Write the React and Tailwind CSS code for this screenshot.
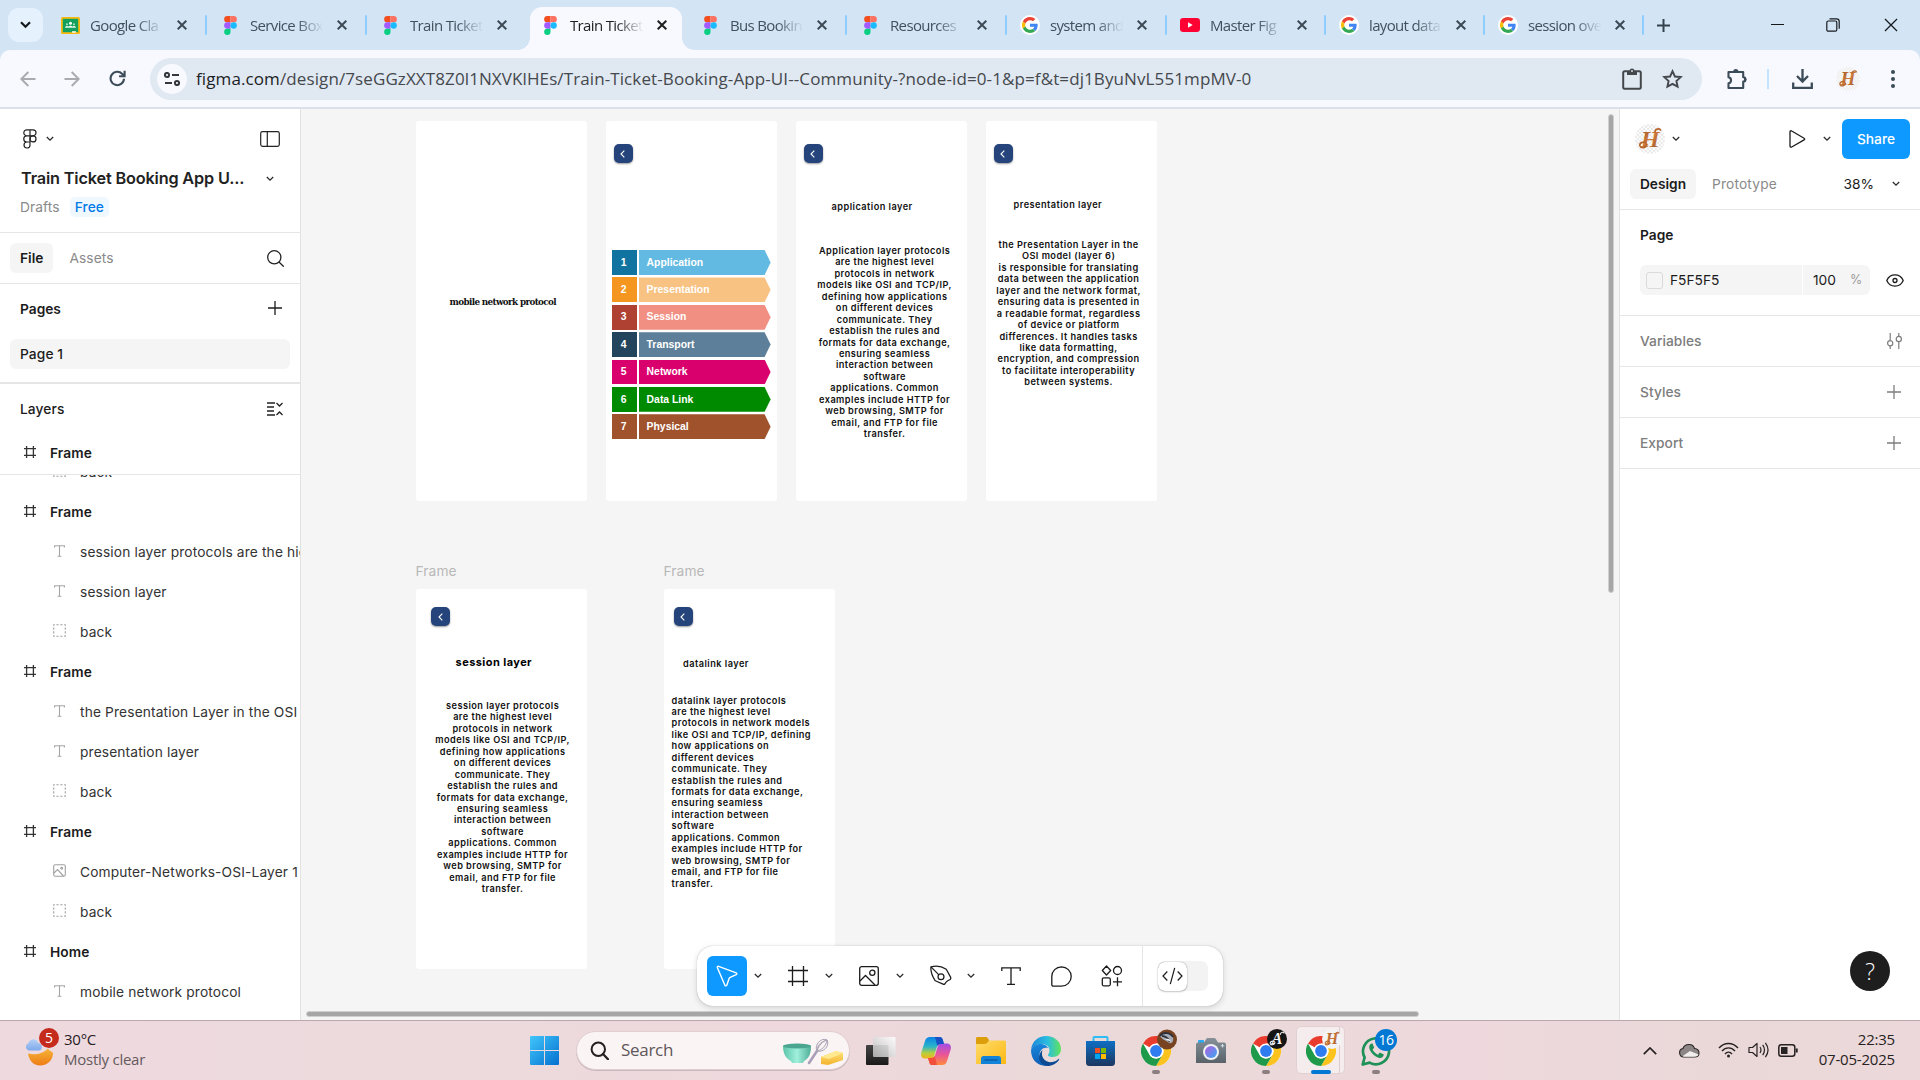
import React from "react";

/* ---------- browser chrome icons ---------- */

const FigmaLogo = () => (
  <svg width="13" height="19" viewBox="0 0 12 18" className="shrink-0">
    <path d="M3 0h3v6H3a3 3 0 0 1 0-6z" fill="#f24e1e" />
    <path d="M6 0h3a3 3 0 0 1 0 6H6z" fill="#ff7262" />
    <path d="M3 6h3v6H3a3 3 0 0 1 0-6z" fill="#a259ff" />
    <circle cx="9" cy="9" r="3" fill="#1abcfe" />
    <path d="M3 12h3v3a3 3 0 1 1-3-3z" fill="#0acf83" />
  </svg>
);

const ClassroomLogo = () => (
  <svg width="19" height="17" viewBox="0 0 19 17" className="shrink-0">
    <rect width="19" height="17" rx="1.5" fill="#f5b912" />
    <rect x="1.8" y="1.8" width="15.4" height="13.4" fill="#12a05c" />
    <circle cx="9.5" cy="6.3" r="1.5" fill="#fff" />
    <circle cx="6" cy="7.3" r="1.1" fill="#9fdcbc" />
    <circle cx="13" cy="7.3" r="1.1" fill="#9fdcbc" />
    <path d="M4 10.8c0-2 3-2 3.400-1.200C8 8.300 11 8.300 11.600 9.600c.4-.8 3.400-.8 3.400 1.200z" fill="#e6f6ee" />
    <rect x="11" y="14.200" width="4" height="1.600" fill="#fff7dc" />
  </svg>
);

const GoogleLogo = () => (
  <span className="flex size-5 shrink-0 items-center justify-center rounded-full bg-white">
    <svg width="16" height="16" viewBox="0 0 48 48">
      <path fill="#EA4335" d="M24 9.500c3.540 0 6.710 1.220 9.210 3.600l6.850-6.850C35.900 2.380 30.470 0 24 0 14.620 0 6.510 5.380 2.560 13.220l7.980 6.190C12.430 13.720 17.740 9.500 24 9.500z" />
      <path fill="#4285F4" d="M46.980 24.550c0-1.570-.15-3.090-.38-4.550H24v9.020h12.940c-.58 2.960-2.260 5.480-4.780 7.180l7.730 6c4.510-4.180 7.090-10.360 7.090-17.650z" />
      <path fill="#FBBC05" d="M10.530 28.590c-.48-1.450-.76-2.990-.76-4.590s.27-3.140.76-4.590l-7.980-6.190C.92 16.460 0 20.120 0 24s.92 7.540 2.560 10.780z" />
      <path fill="#34A853" d="M24 48c6.480 0 11.930-2.130 15.890-5.810l-7.730-6c-2.150 1.450-4.920 2.300-8.160 2.300-6.260 0-11.570-4.220-13.470-9.910l-7.980 6.190C6.510 42.620 14.620 48 24 48z" />
    </svg>
  </span>
);

const YouTubeLogo = () => (
  <svg width="20" height="14" viewBox="0 0 20 14" className="shrink-0">
    <rect width="20" height="14" rx="3.200" fill="#ff0033" />
    <path d="M8 4.200v5.600l4.700-2.800z" fill="#fff" />
  </svg>
);

const TAB_ICONS = {
  classroom: ClassroomLogo,
  figma: FigmaLogo,
  google: GoogleLogo,
  youtube: YouTubeLogo,
};

const TABS = [
  { icon: "classroom", title: "Google Cla", sep: true },
  { icon: "figma", title: "Service Box", sep: true },
  { icon: "figma", title: "Train Ticket" },
  { icon: "figma", title: "Train Ticket", active: true },
  { icon: "figma", title: "Bus Bookin", sep: true },
  { icon: "figma", title: "Resources", sep: true },
  { icon: "google", title: "system and", sep: true },
  { icon: "youtube", title: "Master Fig", sep: true, narrow: true },
  { icon: "google", title: "layout data", sep: true, narrow: true },
  { icon: "google", title: "session ove", sep: true, narrow: true },
];

const Cross = ({ size = 10, w = 2 }) => (
  <svg width={size} height={size} viewBox="0 0 10 10" stroke="currentColor" strokeWidth={w} fill="none">
    <path d="M.7.7l8.600 8.600M9.300.7L.7 9.300" />
  </svg>
);

function Tab({ tab }) {
  const Icon = TAB_ICONS[tab.icon];
  return (
    <div className={"relative flex h-full shrink-0 items-center " + (tab.narrow ? "w-[159px]" : "w-40")}>
      {tab.active && (
        <>
          <div className="absolute top-[7px] bottom-0 left-1 w-[152px] rounded-t-[12px] bg-[#f8f9fe]" />
          <div className="absolute bottom-0 -left-2 size-3 bg-[radial-gradient(circle_at_0_0,#d3e5f5_11.500px,#f8f9fe_12px)]" />
          <div className="absolute bottom-0 left-[156px] size-3 bg-[radial-gradient(circle_at_100%_0,#d3e5f5_11.500px,#f8f9fe_12px)]" />
        </>
      )}
      <span className="relative ml-[14px] flex w-5 justify-center">
        <Icon />
      </span>
      <span
        className={
          "relative ml-[10px] w-[75px] overflow-hidden whitespace-nowrap text-[15px] leading-5 tracking-[-0.65px] [mask-image:linear-gradient(to_right,black_62%,transparent_98%)] " +
          (tab.active ? "text-[#1f1f1f]" : "text-[#41505c]")
        }
      >
        {tab.title}
      </span>
      <span className={"relative ml-[12px] " + (tab.active ? "text-[#1f1f1f]" : "text-[#3c4a55]")}>
        <Cross />
      </span>
      {tab.sep && <span className="absolute -right-px h-5 w-[2.500px] rounded-full bg-[#8dcdff]" />}
    </div>
  );
}

function TabStrip() {
  return (
    <div className="flex h-[50px] items-center bg-[#d3e5f5]">
      <div className="ml-2 mr-[3px] flex h-[34px] w-[35px] shrink-0 items-center justify-center rounded-[11px] bg-[#e5f1fd] text-[#16191c]">
        <svg width="11" height="8" viewBox="0 0 11 8" fill="none" stroke="currentColor" strokeWidth="2.200">
          <path d="M1 1.200l4.500 4.600L10 1.200" />
        </svg>
      </div>
      {TABS.map((t, i) => (
        <Tab key={i} tab={t} />
      ))}
      <svg width="13" height="13" viewBox="0 0 13 13" stroke="#34424d" strokeWidth="2" className="ml-[14px]">
        <path d="M6.500 0v13M0 6.500h13" />
      </svg>
      <div className="ml-auto mr-[22px] flex items-center text-[#16191c]">
        <div className="h-px w-[13px] translate-y-[-1px] bg-current" />
        <svg width="14" height="14" viewBox="0 0 14 14" fill="none" stroke="currentColor" strokeWidth="1.200" className="ml-[42px]">
          <rect x=".8" y="3" width="10" height="10.200" rx="1.500" />
          <path d="M3.500 .8h7a2.700 2.700 0 0 1 2.700 2.700v7.200" />
        </svg>
        <span className="ml-[44px] flex">
          <Cross size={14} w={0.9} />
        </span>
      </div>
    </div>
  );
}

/* Monogram used as the profile picture */
function Monogram({ size, dark }) {
  return (
    <svg width={size} height={size} viewBox="0 0 30 30">
      <defs>
        <linearGradient id="copper" x1="0" y1="0" x2="1" y2="1">
          <stop offset="0" stopColor="#8a4a20" />
          <stop offset=".5" stopColor="#d07a3c" />
          <stop offset="1" stopColor="#96501f" />
        </linearGradient>
        <pattern id="checks" width="4" height="4" patternUnits="userSpaceOnUse">
          <rect width="4" height="4" fill="#fbfbfb" />
          <rect width="2" height="2" fill="#ebebeb" />
          <rect x="2" y="2" width="2" height="2" fill="#ebebeb" />
        </pattern>
      </defs>
      <circle cx="15" cy="15" r="15" fill={dark ? "#151515" : "url(#checks)"} />
      <text
        x="15"
        y="23"
        textAnchor="middle"
        fontSize="24"
        fontStyle="italic"
        fontWeight="bold"
        fontFamily="Liberation Serif, serif"
        fill={dark ? "#f2f2f2" : "url(#copper)"}
      >
        {dark ? "A" : "H"}
      </text>
      <path d="M11 19c-3-2-7 0-6 3 1 2.500 5 2.500 7-1.500M20 8c0-3 4-4 5.500-2" fill="none" stroke={dark ? "#f2f2f2" : "#b8682f"} strokeWidth="1.700" strokeLinecap="round" />
    </svg>
  );
}

function AddressRow() {
  return (
    <div className="h-[59px] bg-[#d3e5f5]">
      <div className="flex h-full items-center rounded-t-[10px] border-b-2 border-[#dce0ea] bg-[#f8f9fe] text-[#3b4b57]">
        <svg width="16" height="16" viewBox="0 0 16 16" fill="none" stroke="#a9abb0" strokeWidth="2" className="ml-5">
          <path d="M15.500 8H1.500M8.300 1L1.300 8l7 7" />
        </svg>
        <svg width="16" height="16" viewBox="0 0 16 16" fill="none" stroke="#a9abb0" strokeWidth="2" className="ml-[28px]">
          <path d="M.5 8h14M7.700 1l7 7-7 7" />
        </svg>
        <svg width="17" height="17" viewBox="0 0 17 17" fill="none" stroke="currentColor" strokeWidth="2.100" className="ml-[29px]">
          <path d="M15 8.800a6.700 6.700 0 1 1-1.800-4.900L15.500 6" />
          <path d="M15.600 .8v5.500h-5.500" />
        </svg>
        <div className="ml-6 flex h-[42px] w-[1552px] items-center rounded-full bg-[#e0e8f2]">
          <span className="ml-[7px] flex size-[30px] items-center justify-center rounded-full bg-[#f8f9fe]">
            <svg width="16" height="14" viewBox="0 0 16 14" fill="none" stroke="#33383c" strokeWidth="2">
              <circle cx="3" cy="3" r="2.100" />
              <path d="M8 3h7M1 11h7" />
              <circle cx="13" cy="11" r="2.100" />
            </svg>
          </span>
          <span className="ml-[9px] whitespace-nowrap text-[17px] leading-none tracking-[0.105px] text-[#45494d]">
            <span className="text-[#1b1d1f]">figma.com</span>
            /design/7seGGzXXT8Z0l1NXVKlHEs/Train-Ticket-Booking-App-UI--Community-?node-id=0-1&amp;p=f&amp;t=dj1ByuNvL551mpMV-0
          </span>
          <svg width="20" height="22" viewBox="0 0 20 22" fill="none" stroke="#44484c" strokeWidth="2" className="ml-auto">
            <rect x="1.200" y="3.200" width="17.600" height="17.600" rx="1.500" />
            <path d="M5 3h10v4H5z" fill="#44484c" stroke="none" />
            <circle cx="10" cy="3" r="2.500" fill="#44484c" stroke="none" />
            <circle cx="10" cy="3" r=".9" fill="#e0e8f2" stroke="none" />
          </svg>
          <svg width="21" height="20" viewBox="0 0 21 20" fill="none" stroke="#44484c" strokeWidth="1.900" className="ml-5 mr-[19px]">
            <path d="M10.500 2.200l2.400 5.300 5.800.6-4.300 3.900 1.200 5.700-5.100-2.900-5.100 2.900 1.200-5.700-4.300-3.900 5.800-.6z" />
          </svg>
        </div>
        <svg width="22" height="22" viewBox="0 0 22 22" fill="none" stroke="currentColor" strokeWidth="2.100" className="ml-6">
          <path d="M2.500 4h14.700v5.200a2.200 2.200 0 0 1 0 4.400V20H2.500v-4.600c3.400-.5 3.400-5.700 0-6.200z" strokeLinejoin="round" />
          <path d="M7.200 3.500a2.600 2.600 0 0 1 5.200 0zM18 9a2.500 2.500 0 0 1 0 5z" fill="currentColor" stroke="none" />
        </svg>
        <span className="ml-[19px] h-5 w-[2px] bg-[#c4e3ff]" />
        <svg width="21" height="20" viewBox="0 0 21 20" fill="none" stroke="currentColor" strokeWidth="2.300" className="ml-[23px]">
          <path d="M10.500 0v12M5 7l5.500 5.500L16 7M1.200 13.500v5.300h18.600v-5.300" />
        </svg>
        <span className="ml-[23px] flex">
          <Monogram size={24} />
        </span>
        <svg width="4" height="18" viewBox="0 0 4 18" fill="currentColor" className="ml-[31px]">
          <circle cx="2" cy="2" r="2" />
          <circle cx="2" cy="9" r="2" />
          <circle cx="2" cy="16" r="2" />
        </svg>
      </div>
    </div>
  );
}

/* ---------- editor icons ---------- */

const Chevron = ({ className = "" }) => (
  <svg width="8" height="6" viewBox="0 0 8 6" fill="none" stroke="#2b2b2b" strokeWidth="1.300" className={"shrink-0 " + className}>
    <path d="M.8 1l3.200 3.200L7.200 1" />
  </svg>
);

const Plus = ({ className = "" }) => (
  <svg width="14" height="14" viewBox="0 0 14 14" stroke="currentColor" strokeWidth="1.300" className={className}>
    <path d="M7 0v14M0 7h14" />
  </svg>
);

const HashIcon = () => (
  <svg width="12" height="12" viewBox="0 0 12 12" stroke="#333" strokeWidth="1.300">
    <path d="M2.600 0v12M9.400 0v12M0 2.600h12M0 9.400h12" />
  </svg>
);

const TextGlyph = () => (
  <svg width="11" height="12" viewBox="0 0 11 12" fill="none" stroke="#a5a5a5" strokeWidth="1.100">
    <path d="M.6 2.500V.8h9.800v1.700M5.500.8v10.500M3.600 11.300h3.800" />
  </svg>
);

const GroupIcon = () => (
  <svg width="13" height="13" viewBox="0 0 13 13" fill="none" stroke="#a0a0a0" strokeWidth="1.100">
    <rect x=".7" y=".7" width="11.600" height="11.600" strokeDasharray="2.200 1.670" strokeDashoffset="1.100" />
  </svg>
);

const ImageGlyph = () => (
  <svg width="13" height="13" viewBox="0 0 13 13" fill="none" stroke="#a0a0a0" strokeWidth="1.100">
    <rect x=".7" y=".7" width="11.600" height="11.600" rx="1.500" />
    <path d="M1 9l3.500-3.400L10.500 12" />
    <circle cx="8.700" cy="4.200" r=".9" />
  </svg>
);

const LAYER_ICONS = { text: TextGlyph, group: GroupIcon, image: ImageGlyph };

const LAYERS = [
  ["group", "back"],
  ["frame", "Frame"],
  ["text", "session layer protocols are the hig"],
  ["text", "session layer"],
  ["group", "back"],
  ["frame", "Frame"],
  ["text", "the Presentation Layer in the OSI"],
  ["text", "presentation layer"],
  ["group", "back"],
  ["frame", "Frame"],
  ["image", "Computer-Networks-OSI-Layer 1"],
  ["group", "back"],
  ["frame", "Home"],
  ["text", "mobile network protocol"],
];

function LayerRow({ kind, name }) {
  if (kind === "frame") {
    return (
      <div className="flex h-10 shrink-0 items-center pl-6 font-semibold text-[#1c1c1c]">
        <span className="-mt-0.5">
          <HashIcon />
        </span>
        <span className="ml-[14px] tracking-[0.1px]">{name}</span>
      </div>
    );
  }
  const Icon = LAYER_ICONS[kind];
  return (
    <div className="flex h-10 shrink-0 items-center overflow-hidden pl-[52px] whitespace-nowrap text-[#333]">
      <span className="-mt-[3px] flex w-[14px] shrink-0 justify-center">
        <Icon />
      </span>
      <span className="ml-[14px] tracking-[0.14px]">{name}</span>
    </div>
  );
}

function LeftPanel() {
  return (
    <aside className="flex w-[301px] shrink-0 flex-col overflow-hidden border-r border-[#e2e2e2] bg-white">
      <div className="flex h-[124px] shrink-0 flex-col border-b border-[#e6e6e6]">
        <div className="mt-5 flex h-5 items-center pl-[23px] pr-5">
          <svg width="14" height="20" viewBox="0 0 14 20" fill="none" stroke="#222" strokeWidth="1.200">
            <path d="M3.800.8H10a2.900 2.900 0 0 1 0 6H3.800a3 3 0 0 1 0-6zM7 .8v15.400a3 3 0 1 1-3.200-3.200H7M7 6.900H3.800a3 3 0 0 0 0 6.100H7" />
            <circle cx="10" cy="9.900" r="3" />
          </svg>
          <Chevron className="ml-[9px]" />
          <svg width="20" height="16" viewBox="0 0 20 16" fill="none" stroke="#222" strokeWidth="1.200" className="ml-auto">
            <rect x=".7" y=".7" width="18.600" height="14.600" rx="1.800" />
            <path d="M7.300 1v14" />
          </svg>
        </div>
        <div className="mt-5 flex h-5 items-center pr-[26px] pl-[21px]">
          <span className="-mt-px text-[16.250px] font-semibold tracking-[-0.16px] text-[#222]">Train Ticket Booking App U...</span>
          <Chevron className="ml-auto" />
        </div>
        <div className="mt-2 flex h-5 items-center pl-5">
          <span className="tracking-[0.1px] text-[#8a8a8a]">Drafts</span>
          <span className="ml-[10px] flex h-5 items-center rounded-[5px] bg-[#f0f8ff] px-[5px] font-medium tracking-[0.1px] text-[#007be5]">Free</span>
        </div>
      </div>
      <div className="flex h-[51px] shrink-0 items-center border-b border-[#e6e6e6] pl-[10px] pr-4">
        <span className="flex h-[30px] items-center rounded-[6px] bg-[#f5f5f5] px-[10px] font-semibold text-[#1c1c1c]">File</span>
        <span className="ml-4 tracking-[0.1px] text-[#8a8a8a]">Assets</span>
        <svg width="17" height="17" viewBox="0 0 17 17" fill="none" stroke="#222" strokeWidth="1.300" className="ml-auto">
          <circle cx="7.300" cy="7.300" r="6.600" />
          <path d="M12 12l4.700 4.700" />
        </svg>
      </div>
      <div className="flex h-[100px] shrink-0 flex-col border-b-2 border-[#e6e6e6] px-[10px]">
        <div className="flex h-[50px] items-center justify-between px-[10px] font-semibold text-[#1c1c1c]">
          Pages
          <Plus className="-mr-[2px] -mt-0.5" />
        </div>
        <div className="mt-[5px] flex h-[30px] items-center rounded-[6px] bg-[#f5f5f5] px-[10px] font-medium tracking-[0.1px] text-[#1c1c1c]">Page 1</div>
      </div>
      <div className="flex h-[49px] shrink-0 items-center justify-between pt-px pr-[17px] pl-5 font-medium tracking-[0.1px] text-[#1c1c1c]">
        Layers
        <svg width="16" height="14" viewBox="0 0 16 14" fill="none" stroke="#222" strokeWidth="1.300">
          <path d="M0 1h8M0 5h7M0 9h7M0 13h8M9.500 1l3 3 3-3M9.500 13l3-3 3 3" />
        </svg>
      </div>
      <div className="flex h-[42px] shrink-0 flex-col border-b border-[#e6e6e6]">
        <LayerRow kind="frame" name="Frame" />
      </div>
      <div className="flex min-h-0 flex-1 flex-col overflow-hidden">
        <div className="-mt-[23px] flex flex-col">
          {LAYERS.map(([kind, name], i) => (
            <LayerRow key={i} kind={kind} name={name} />
          ))}
        </div>
      </div>
    </aside>
  );
}

/* ---------- canvas ---------- */

const Artboard = ({ className, children }) => (
  <div className={"absolute h-[380px] w-[171px] rounded-[3px] bg-white " + className}>{children}</div>
);

const BackButton = ({ className }) => (
  <div className={"absolute flex size-[19px] items-center justify-center rounded-[5px] bg-[#26447c] shadow-[0_1px_2px_rgba(0,0,0,0.4)] " + className}>
    <svg width="5" height="8" viewBox="0 0 5 8" fill="none" stroke="#fff" strokeWidth="1.100" className="-ml-px">
      <path d="M4.300.6L1 4l3.300 3.400" />
    </svg>
  </div>
);

const Copy = ({ className, lines }) => (
  <div className={"absolute flex flex-col whitespace-nowrap text-[9.200px] leading-[11.430px] font-semibold tracking-[0.46px] text-[#111] " + className}>
    {lines.map((l) => (
      <span key={l}>{l}</span>
    ))}
  </div>
);

const OSI = [
  ["1", "Application", "bg-[#11739f]", "bg-[#62b9e1]"],
  ["2", "Presentation", "bg-[#f4961f]", "bg-[#f8c283]"],
  ["3", "Session", "bg-[#ae4132]", "bg-[#f18f83]"],
  ["4", "Transport", "bg-[#23445d]", "bg-[#5d7f99]"],
  ["5", "Network", "bg-[#d9006d]", "bg-[#d9006d]"],
  ["6", "Data Link", "bg-[#008a00]", "bg-[#008a00]"],
  ["7", "Physical", "bg-[#a0522d]", "bg-[#a0522d]"],
];

const PROTOCOL_LINES = [
  "are the highest level",
  "protocols in network",
  "models like OSI and TCP/IP,",
  "defining how applications",
  "on different devices",
  "communicate. They",
  "establish the rules and",
  "formats for data exchange,",
  "ensuring seamless",
  "interaction between",
  "software",
  "applications. Common",
  "examples include HTTP for",
  "web browsing, SMTP for",
  "email, and FTP for file",
  "transfer.",
];

const PRESENTATION_LINES = [
  "the Presentation Layer in the",
  "OSI model (layer 6)",
  "is responsible for translating",
  "data between the application",
  "layer and the network format,",
  "ensuring data is presented in",
  "a readable format, regardless",
  "of device or platform",
  "differences. It handles tasks",
  "like data formatting,",
  "encryption, and compression",
  "to facilitate interoperability",
  "between systems.",
];

const DATALINK_LINES = [
  "datalink layer protocols",
  "are the highest level",
  "protocols in network models",
  "like OSI and TCP/IP, defining",
  "how applications on",
  "different devices",
  ...PROTOCOL_LINES.slice(5),
];

const FrameLabel = ({ className }) => (
  <span className={"absolute text-[13.750px] leading-5 tracking-[0.1px] text-[#b8b8b8] " + className}>Frame</span>
);

const ToolGap = ({ children, className }) => <span className={"flex shrink-0 items-center justify-center " + className}>{children}</span>;

function ToolBar() {
  return (
    <div className="absolute top-[837px] left-[396px] flex h-[60px] w-[526px] items-center rounded-[16px] bg-white pl-[10px] shadow-[0_0_1px_rgba(0,0,0,0.35),0_2px_6px_rgba(0,0,0,0.14)]">
      <ToolGap className="size-10 rounded-[6px] bg-[#0d99ff]">
        <svg width="22" height="22" viewBox="0 0 22 22" fill="none" stroke="#fff" strokeWidth="1.400" strokeLinejoin="round">
          <path d="M1.300 2.500a1 1 0 0 1 1.300-1.200l17.600 6.600a1 1 0 0 1 0 1.800l-6 2.600a2 2 0 0 0-1 1l-2.400 6.900a1 1 0 0 1-1.900 0z" />
        </svg>
      </ToolGap>
      <ToolGap className="w-[21px]"><Chevron /></ToolGap>
      <ToolGap className="ml-5 w-5">
        <svg width="20" height="20" viewBox="0 0 20 20" stroke="#1c1c1c" strokeWidth="1.300">
          <path d="M4.500 0v20M15.500 0v20M0 4.500h20M0 15.500h20" />
        </svg>
      </ToolGap>
      <ToolGap className="ml-[10px] w-[21px]"><Chevron /></ToolGap>
      <ToolGap className="ml-5 w-5">
        <svg width="20" height="20" viewBox="0 0 20 20" fill="none" stroke="#1c1c1c" strokeWidth="1.300">
          <rect x=".7" y=".7" width="18.600" height="18.600" rx="2" />
          <circle cx="13.300" cy="6.800" r="2.600" />
          <path d="M1 15l5.500-5.500 9.500 9.500" />
        </svg>
      </ToolGap>
      <ToolGap className="ml-[11px] w-5"><Chevron /></ToolGap>
      <ToolGap className="ml-[20px] w-[22px]">
        <svg width="23" height="22" viewBox="0 0 23 22" fill="none" stroke="#1c1c1c" strokeWidth="1.300" strokeLinejoin="round">
          <path d="M1 1.500C6 0 12.500 1 17 4l4.500 8.200c.5 1 .3 1.700-.4 2.400L18.500 16c-1 .6-2 1.700-2.800 3-.5.900-1.200 1-2 .5L5.500 16C2.500 11.500.5 6 1 1.500z" />
          <path d="M1 1.500l8.300 8.300" />
          <circle cx="11.500" cy="11.800" r="3.100" />
        </svg>
      </ToolGap>
      <ToolGap className="ml-[9px] w-5"><Chevron /></ToolGap>
      <ToolGap className="ml-[20px] w-5">
        <svg width="20" height="18" viewBox="0 0 20 18" fill="none" stroke="#1c1c1c" strokeWidth="1.300">
          <path d="M.8 4V.8h18.400V4M10 .8v16.500M6 17.300h8" />
        </svg>
      </ToolGap>
      <ToolGap className="ml-[30px] w-[21px]">
        <svg width="21" height="21" viewBox="0 0 21 21" fill="none" stroke="#1c1c1c" strokeWidth="1.300">
          <path d="M10.500.8a9.700 9.700 0 0 1 0 19.400H2.300a1.500 1.500 0 0 1-1.500-1.500v-8.200A9.700 9.700 0 0 1 10.500.8z" />
        </svg>
      </ToolGap>
      <ToolGap className="ml-[29px] w-[22px]">
        <svg width="22" height="22" viewBox="0 0 22 22" fill="none" stroke="#1c1c1c" strokeWidth="1.300">
          <path d="M5.500 1l4.200 4.500-4.200 4.500-4.200-4.500z" strokeLinejoin="round" />
          <circle cx="16.500" cy="5.500" r="4" />
          <rect x="1.300" y="12.800" width="8" height="8" rx="1.500" />
          <path d="M16.500 12.300v9M12 16.800h9" />
        </svg>
      </ToolGap>
      <div className="ml-[19px] h-full w-px bg-[#e6e6e6]" />
      <div className="ml-[15px] flex h-[30px] w-[50px] items-center rounded-[7px] bg-[#f3f3f3]">
        <span className="flex h-[29px] w-[29px] items-center justify-center rounded-[7px] bg-white shadow-[0_0_1px_rgba(0,0,0,0.5),0_1px_2px_rgba(0,0,0,0.18)]">
          <svg width="21" height="18" viewBox="0 0 21 18" fill="none" stroke="#1c1c1c" strokeWidth="1.200">
            <path d="M5.300 4.500L1 9l4.300 4.500M15.700 4.500L20 9l-4.300 4.500M12.700.8L8.300 17.200" />
          </svg>
        </span>
      </div>
    </div>
  );
}

function Canvas() {
  return (
    <main className="relative min-w-0 flex-1 overflow-hidden bg-[#f5f5f5]">
      <Artboard className="top-3 left-[114.600px]">
        <span className="absolute top-[174px] left-[34px] whitespace-nowrap font-['DejaVu_Serif'] text-[8.800px] leading-[14px] font-bold tracking-[-0.640px] text-[#111]">
          mobile network protocol
        </span>
      </Artboard>

      <Artboard className="top-3 left-[304.600px]">
        <BackButton className="top-[23px] left-2" />
        <div className="absolute top-[129px] left-[6px] flex w-[159px] flex-col gap-[2.500px] font-['Liberation_Sans'] text-[10.400px] font-bold text-white">
          {OSI.map(([n, label, dark, light]) => (
            <div key={n} className="flex h-[24.900px] gap-[2px]">
              <span className={"flex w-[25px] items-center justify-center pr-px " + dark}>{n}</span>
              <span className={"flex flex-1 items-center pl-[8px] [clip-path:polygon(0_0,calc(100%-6px)_0,100%_50%,calc(100%-6px)_100%,0_100%)] " + light}>
                {label}
              </span>
            </div>
          ))}
        </div>
      </Artboard>

      <Artboard className="top-3 left-[494.600px]">
        <BackButton className="top-[23px] left-2" />
        <Copy className="top-[79.500px] left-[36px]" lines={["application layer"]} />
        <Copy className="top-[124px] left-[9px] w-40 items-center" lines={["Application layer protocols", ...PROTOCOL_LINES]} />
      </Artboard>

      <Artboard className="top-3 left-[684.600px]">
        <BackButton className="top-[23px] left-2" />
        <Copy className="top-[77.500px] left-[28px]" lines={["presentation layer"]} />
        <Copy className="top-[118px] left-[3px] w-40 items-center" lines={PRESENTATION_LINES} />
      </Artboard>

      <FrameLabel className="top-[452px] left-[114.500px]" />
      <Artboard className="top-[480px] left-[114.600px]">
        <BackButton className="top-[18px] left-[15.500px]" />
        <span className="absolute top-[66px] left-[40px] whitespace-nowrap text-[11px] leading-[14px] font-bold tracking-[0.430px] text-black">session layer</span>
        <Copy className="top-[111px] left-[7px] w-40 items-center" lines={["session layer protocols", ...PROTOCOL_LINES]} />
      </Artboard>

      <FrameLabel className="top-[452px] left-[362.500px]" />
      <Artboard className="top-[480px] left-[362.600px]">
        <BackButton className="top-[18px] left-[10px]" />
        <Copy className="top-[69px] left-[19.500px]" lines={["datalink layer"]} />
        <Copy className="top-[105.500px] left-[8px]" lines={DATALINK_LINES} />
      </Artboard>

      <div className="absolute top-[5px] right-[5px] h-[479px] w-[6px] rounded-full border border-[#cfcfcf] bg-[#a6a6a6]" />
      <div className="absolute bottom-[3px] left-[5px] h-[6px] w-[1113px] rounded-full border border-[#cfcfcf] bg-[#a6a6a6]" />

      <ToolBar />
    </main>
  );
}

/* ---------- right panel ---------- */

function Section({ label, children }) {
  return (
    <div className="flex h-[51px] items-center justify-between border-b border-[#e6e6e6] pr-[18px] pl-5 font-medium tracking-[0.05px] text-[#7d7d7d]">
      {label}
      <span className="flex w-4 justify-center text-[#7d7d7d]">{children}</span>
    </div>
  );
}

function RightPanel() {
  return (
    <aside className="relative flex w-[301px] shrink-0 flex-col border-l border-[#e2e2e2] bg-white">
      <div className="flex h-[101px] shrink-0 flex-col border-b border-[#e6e6e6]">
        <div className="mt-[10px] flex h-10 items-center pr-[10px] pl-[15px]">
          <Monogram size={30} />
          <Chevron className="ml-[7px]" />
          <svg width="17" height="18" viewBox="0 0 17 18" fill="none" stroke="#1c1c1c" strokeWidth="1.300" strokeLinejoin="round" className="ml-auto">
            <path d="M1 1.800C1 .9 2 .5 2.700 1l12.400 7.200c.8.500.8 1.300 0 1.700L2.700 17c-.8.500-1.700 0-1.700-.9z" />
          </svg>
          <Chevron className="ml-[17px]" />
          <span className="ml-[11px] flex h-10 w-[68px] items-center justify-center rounded-[6px] bg-[#0d99ff] font-medium text-white">Share</span>
        </div>
        <div className="mt-[10px] flex h-[30px] items-center pr-5 pl-[10px]">
          <span className="flex h-full w-[66px] items-center justify-center rounded-[6px] bg-[#f5f5f5] font-semibold text-[#1c1c1c]">Design</span>
          <span className="ml-4 tracking-[0.15px] text-[#8a8a8a]">Prototype</span>
          <span className="ml-auto text-[#1c1c1c]">38%</span>
          <Chevron className="ml-[18px]" />
        </div>
      </div>
      <div className="flex h-[106px] shrink-0 flex-col border-b border-[#e6e6e6] pl-5">
        <span className="mt-[15px] leading-5 font-semibold text-[#1c1c1c]">Page</span>
        <div className="mt-5 flex h-[30px] items-center">
          <div className="flex h-full w-[230px] items-center rounded-[6px] bg-[#f5f5f5] text-[#1c1c1c]">
            <span className="ml-[6px] size-[17px] rounded-[3px] border border-[#dadada] bg-[#f5f5f5]" />
            <span className="ml-[7px] w-[132px]">F5F5F5</span>
            <span className="h-full w-px bg-white" />
            <span className="ml-[10px] w-[37px]">100</span>
            <span className="text-[12.500px] text-[#9a9a9a]">%</span>
          </div>
          <svg width="18" height="13" viewBox="0 0 18 13" fill="none" stroke="#1c1c1c" strokeWidth="1.300" className="ml-4">
            <path d="M.8 6.500C2.300 3 5.400.9 9 .9s6.700 2.100 8.200 5.600c-1.500 3.500-4.600 5.600-8.200 5.600S2.300 10 .8 6.500z" />
            <circle cx="9" cy="6.500" r="2" />
          </svg>
        </div>
      </div>
      <Section label="Variables">
        <svg width="15" height="16" viewBox="0 0 15 16" fill="none" stroke="currentColor" strokeWidth="1.200" className="shrink-0">
          <path d="M3.200 0v7.500M3.200 13v3M11.800 0v3.500M11.800 9v7" />
          <circle cx="3.200" cy="10.200" r="2.600" />
          <circle cx="11.800" cy="6" r="2.600" />
        </svg>
      </Section>
      <Section label="Styles"><Plus /></Section>
      <Section label="Export"><Plus /></Section>
      <span className="absolute right-[30px] bottom-[29px] flex size-10 items-center justify-center rounded-full bg-[#1e1e1e] font-['Open_Sans'] text-[23px] font-light text-white">?</span>
    </aside>
  );
}

/* ---------- task bar ---------- */

const ChromeLogo = () => (
  <svg width="30" height="30" viewBox="0 0 30 30">
    <circle cx="15" cy="15" r="15" fill="#fff" />
    <path d="M15 15L2 7.500A15 15 0 0 1 28 7.500H15z" fill="#ea3c2e" />
    <path d="M28 7.500A15 15 0 0 1 15 30l6.500-11.200A7.500 7.500 0 0 0 15 7.500z" fill="#fcc31e" />
    <path d="M2 7.500l6.500 11.300A7.500 7.500 0 0 0 21.500 18.800L15 30A15 15 0 0 1 2 7.500z" fill="#1f9a4b" />
    <circle cx="15" cy="15" r="7.500" fill="#fff" />
    <circle cx="15" cy="15" r="5.900" fill="#2f7cf0" />
  </svg>
);

const TaskViewLogo = () => (
  <svg width="31" height="30" viewBox="0 0 31 30">
    <defs>
      <linearGradient id="tvDark" x1="0" y1="0" x2="0" y2="1"><stop offset="0" stopColor="#444" /><stop offset="1" stopColor="#1a1a1a" /></linearGradient>
      <linearGradient id="tvLight" x1="1" y1="0" x2="0" y2="1"><stop offset="0" stopColor="#fff" /><stop offset="1" stopColor="#bbb" /></linearGradient>
    </defs>
    <rect x="1" y="9" width="22.500" height="20" rx="1" fill="url(#tvDark)" />
    <rect x="8" y="1" width="22.500" height="20" rx="1" fill="url(#tvLight)" opacity=".88" />
  </svg>
);

const CopilotLogo = () => (
  <svg width="30" height="28" viewBox="0 0 30 28">
    <defs>
      <linearGradient id="cpA" x1="0" y1="0" x2="0" y2="1"><stop offset="0" stopColor="#0a84e8" /><stop offset=".45" stopColor="#2cb5c8" /><stop offset=".75" stopColor="#b8cf3c" /><stop offset="1" stopColor="#f2b31c" /></linearGradient>
      <linearGradient id="cpB" x1="0" y1="0" x2="0" y2="1"><stop offset="0" stopColor="#a24ee8" /><stop offset=".5" stopColor="#e8559a" /><stop offset="1" stopColor="#ff8a3c" /></linearGradient>
    </defs>
    <path d="M9 0h9.500c2 0 2.700 1 3.200 2.600L23 7h-3.500c-2 0-3 1-3.600 3l-2.600 8.500C12.500 21 11 21.500 9 21.500H4C.5 21.500-.5 18.500.3 15.500L4 4C5 1 6.500 0 9 0z" fill="url(#cpA)" />
    <path d="M21 28h-9.500c-2 0-2.700-1-3.200-2.600L7 21h3.500c2 0 3-1 3.600-3l2.600-8.500C17.500 7 19 6.500 21 6.500h5c3.500 0 4.500 3 3.700 6L26 24c-1 3-2.500 4-5 4z" fill="url(#cpB)" />
    <path d="M14 0h4.500c2 0 2.700 1 3.200 2.600L23 7h-3.500c-1.500 0-2.500.7-3.200 2z" fill="#1751c4" />
    <path d="M16 28h-4.500c-2 0-2.700-1-3.200-2.600L7 21h3.500c1.500 0 2.500-.7 3.200-2z" fill="#f0503c" />
  </svg>
);

const ExplorerLogo = () => (
  <svg width="30" height="27" viewBox="0 0 30 27">
    <defs><linearGradient id="fe" x1="0" y1="0" x2="1" y2="1"><stop offset="0" stopColor="#ffdc6b" /><stop offset="1" stopColor="#fcb814" /></linearGradient></defs>
    <path d="M0 1.500C0 .6.600 0 1.500 0h8.300c.8 0 1.300.3 1.700.8L13 3v5H0z" fill="#dd9e0c" />
    <path d="M0 7h8.500c1 0 1.800-.3 2.500-1l2-2.500h15.500c.9 0 1.500.6 1.500 1.500V27H0z" fill="url(#fe)" />
    <path d="M5 27v-5.500c0-1.500 1-2.500 2.500-2.500h15c1.500 0 2.500 1 2.500 2.500V27z" fill="#1383d8" />
    <path d="M8.500 23h13" stroke="#0a5ca8" strokeWidth="1.500" />
  </svg>
);

const EdgeLogo = () => (
  <svg width="30" height="30" viewBox="0 0 30 30">
    <defs>
      <linearGradient id="ed1" x1="0" y1=".3" x2="1" y2=".3"><stop offset="0" stopColor="#1a86d8" /><stop offset=".55" stopColor="#2bbde0" /><stop offset="1" stopColor="#62e35c" /></linearGradient>
      <linearGradient id="ed2" x1="0" y1="0" x2="0" y2="1"><stop offset="0" stopColor="#1787dc" /><stop offset="1" stopColor="#0f5fb5" /></linearGradient>
    </defs>
    <path d="M0 14C1 5 7.500 0 15 0c9 0 15 6 15 13 0 5-3.500 8-8.500 8-3.500 0-4.500-1.200-4.500-2 0-1 1.500-1.500 1.500-4.500 0-4-3.500-6.500-8-6.500C6 8 2 10 0 14z" fill="url(#ed1)" />
    <path d="M0 14c2-4.500 6.500-6.500 10.500-6 3 .3 5.500 2 6.500 4-5-1.500-9 2.500-8.300 8 .5 4.500 4 8.500 8.300 9.800C7 30.800 0 24 0 14z" fill="url(#ed2)" />
    <path d="M11.500 14c-2.500 8 3.500 13 10 12 2.500-.4 4.500-1.500 6-3 .4-.4.900.1.700.5C26 27.500 21 30 16.500 30 10 29 7 24 8.500 19c.6-2 1.500-3.800 3-5z" fill="#0c4a94" />
  </svg>
);

const StoreLogo = () => (
  <svg width="29" height="30" viewBox="0 0 29 30">
    <defs><linearGradient id="st" x1="0" y1="0" x2="0" y2="1"><stop offset="0" stopColor="#0e6fc4" /><stop offset="1" stopColor="#1c365f" /></linearGradient></defs>
    <path d="M7.500 6V2c0-.6.400-1 1-1h12c.6 0 1 .4 1 1v4" fill="none" stroke="#2ebcf4" strokeWidth="2" />
    <path d="M0 5h29v21.500a3.500 3.500 0 0 1-3.500 3.500h-22A3.500 3.500 0 0 1 0 26.500z" fill="url(#st)" />
    <path d="M9 12h5v5H9z" fill="#f25022" />
    <path d="M15 12h5v5h-5z" fill="#7fba00" />
    <path d="M9 18h5v5H9z" fill="#00a4ef" />
    <path d="M15 18h5v5h-5z" fill="#ffb900" />
  </svg>
);

const CameraLogo = () => (
  <svg width="30" height="25" viewBox="0 0 30 25">
    <defs>
      <linearGradient id="lens" x1="0" y1="0" x2="1" y2="1"><stop offset="0" stopColor="#b55fe0" /><stop offset="1" stopColor="#35a6f2" /></linearGradient>
      <linearGradient id="cam" x1="0" y1="0" x2="0" y2="1"><stop offset="0" stopColor="#86919a" /><stop offset="1" stopColor="#596269" /></linearGradient>
    </defs>
    <rect x="2" y="2" width="6" height="4" rx="1" fill="#2aa8f0" />
    <path d="M2 4.500h6l2-3.300C10.500.4 11 0 12 0h6c1 0 1.500.4 2 1.200l2 3.300h6a2 2 0 0 1 2 2V25H0V6.500a2 2 0 0 1 2-2z" fill="url(#cam)" />
    <circle cx="15" cy="14" r="8" fill="#eef1f4" />
    <circle cx="15" cy="14" r="6" fill="url(#lens)" />
    <path d="M26.500 6v3.500M24.700 7.800h3.600" stroke="#d8dde0" strokeWidth="1" />
  </svg>
);

const WhatsAppLogo = () => (
  <svg width="30" height="30" viewBox="0 0 30 30">
    <path d="M1.700 28.500l1.900-7A13 13 0 1 1 8.600 26.600z" fill="none" stroke="#1d9157" strokeWidth="2.700" strokeLinejoin="round" />
    <path d="M10.500 7.500c-2.500 1-3 3.800-1.500 6.700 1.800 3.400 4.600 6.200 8.500 7.600 2.500.8 5-.2 5.300-3.200l-4-2.100-1.800 2.200c-2.500-1-4.300-2.800-5.400-5.200l1.600-1.700-1.700-4.300z" fill="#1d9157" />
  </svg>
);

const BaseballAvatar = () => (
  <svg width="20" height="21" viewBox="0 0 20 21">
    <circle cx="10" cy="10.500" r="10" fill="#774320" />
    <path d="M3 7c3-4 10-4 13 1 1 4-1 7-4 6-3-3-7-3-9-7z" fill="#a9adb8" />
    <path d="M5 7c3 0 6 2 8 6M3 7c3-4 10-4 13 1" fill="none" stroke="#2e313b" strokeWidth="2" />
    <path d="M8 10c3-1 6 0 6 3z" fill="#f1f2f5" />
  </svg>
);

const APPS = [
  { id: "taskview", icon: TaskViewLogo },
  { id: "copilot", icon: CopilotLogo },
  { id: "explorer", icon: ExplorerLogo },
  { id: "edge", icon: EdgeLogo },
  { id: "store", icon: StoreLogo },
  { id: "chrome-1", icon: ChromeLogo, open: true, badge: <BaseballAvatar /> },
  { id: "camera", icon: CameraLogo },
  { id: "chrome-2", icon: ChromeLogo, open: true, badge: <Monogram size={20} dark /> },
  { id: "chrome-3", icon: ChromeLogo, focused: true, badge: <Monogram size={20} /> },
  { id: "whatsapp", icon: WhatsAppLogo, open: true, count: 16 },
];

function TaskApp({ app }) {
  const Icon = app.icon;
  return (
    <div className="relative flex h-full w-[55px] shrink-0 items-center justify-center">
      {app.focused && (
        <div className="absolute top-[5px] left-[3px] h-12 w-[49px] rounded-[5px] border border-[#e3d0d3] bg-[#f5ecee]">
          <div className="absolute inset-y-0 right-1 border-r border-[#ddcdd0]" />
        </div>
      )}
      <span className="relative flex">
        <Icon />
      </span>
      {app.badge && <span className="absolute top-[8px] left-[29px] flex">{app.badge}</span>}
      {app.count && (
        <span className="absolute top-[8px] left-[27px] flex size-[22px] items-center justify-center rounded-full bg-[#0078d4] pb-px text-[14px] tracking-[-0.5px] text-white">
          {app.count}
        </span>
      )}
      {app.open && <span className="absolute bottom-[6px] h-1 w-2 rounded-full bg-[#8c7f82]" />}
      {app.focused && <span className="absolute bottom-[6px] h-1 w-5 rounded-full bg-[#0078d4]" />}
    </div>
  );
}

function TaskBar() {
  return (
    <footer className="flex h-[60px] shrink-0 items-center border-t border-[#b9a9ac] bg-[linear-gradient(90deg,#eed9df_0%,#ecdadc_25%,#eed8dd_40%,#ead9d8_60%,#eed8dd_76%,#ead8d8_90%,#ecd8da_100%)]">
      <div className="flex w-[530px] items-center">
        <div className="relative ml-6 size-[36px]">
          <svg width="32" height="28" viewBox="0 0 32 28" className="absolute top-[5px] left-0">
            <defs>
              <linearGradient id="moon" x1="0" y1="0" x2="0" y2="1"><stop offset="0" stopColor="#f5b53a" /><stop offset="1" stopColor="#ee7c14" /></linearGradient>
              <linearGradient id="cloud" x1="0" y1="0" x2="0" y2="1"><stop offset="0" stopColor="#b4d0f6" /><stop offset="1" stopColor="#7ea9ea" /></linearGradient>
            </defs>
            <path d="M4 15.500c8 2 15 0 20-5 1 2 5 4 5 4 0 8-5 12.500-13 13C9 27.500 5 22 4 15.500z" fill="url(#moon)" />
            <path d="M4.500 12.500a4 4 0 0 1 0-7.500C6 0 13 0 14 5c5 0 5 7.500 1 7.500z" fill="url(#cloud)" />
          </svg>
          <span className="absolute -top-[5px] left-[15px] flex size-[20px] items-center justify-center rounded-full bg-[#c42b1c] text-[14px] leading-none text-white">5</span>
        </div>
        <div className="-mt-[3px] ml-1 flex flex-col text-[15px] leading-[20.500px] tracking-[-0.25px]">
          <span className="text-[#27201f]">30°C</span>
          <span className="text-[#655a5c]">Mostly clear</span>
        </div>
      </div>
      <svg width="29" height="29" viewBox="0 0 29 29">
        <defs><linearGradient id="win" x1="0" y1="0" x2="1" y2="1"><stop offset="0" stopColor="#41c6fb" /><stop offset="1" stopColor="#0470cf" /></linearGradient></defs>
        <path d="M0 1a1 1 0 0 1 1-1h13v14H0zM15 0h13a1 1 0 0 1 1 1v13H15zM0 15h14v14H1a1 1 0 0 1-1-1zM15 15h14v13a1 1 0 0 1-1 1H15z" fill="url(#win)" />
      </svg>
      <div className="ml-[17px] flex h-[39px] w-[274px] items-center rounded-full border border-[#e0ced1] bg-[#faf4f4] shadow-[0_1px_0_#c9b8bb]">
        <svg width="19" height="19" viewBox="0 0 19 19" fill="none" stroke="#252122" strokeWidth="2" className="ml-[13px]">
          <circle cx="8.300" cy="8.300" r="6.700" />
          <path d="M13 13l5 5.200" strokeLinecap="round" strokeWidth="2.300" />
        </svg>
        <span className="-mt-px ml-3 text-[17px] tracking-[-0.3px] text-[#5f5759]">Search</span>
        <svg width="62" height="30" viewBox="0 0 62 30" className="ml-auto mr-[4px]">
          <defs>
            <linearGradient id="bowl" x1="0" y1="0" x2="1" y2="0"><stop offset="0" stopColor="#5cc4a8" /><stop offset=".5" stopColor="#a0f0dc" /><stop offset="1" stopColor="#4fae98" /></linearGradient>
            <linearGradient id="butter" x1="0" y1="0" x2="0" y2="1"><stop offset="0" stopColor="#ffe27a" /><stop offset="1" stopColor="#f3b32c" /></linearGradient>
          </defs>
          <path d="M0 10c0 9 4 13 8 15l1 2h11l1-2c4-2 7-6 7-15z" fill="url(#bowl)" />
          <ellipse cx="14" cy="10" rx="14" ry="2.500" fill="#4aa690" />
          <path d="M26 27l8-12" stroke="#a99fb8" strokeWidth="2.600" strokeLinecap="round" />
          <path d="M34 15c-3-6 4-14 10-11 3 5-3 13-10 11zM34 15C36 9 40 5 44 4M34 15c0-5 3-9 10-11M34 15c5-1 9-5 10-11" fill="none" stroke="#a8a2b4" strokeWidth="1" />
          <path d="M38 21l15-6 7 2v7l-15 5-7-1z" fill="url(#butter)" />
          <path d="M38 21l15-6 7 2-14 6z" fill="#ffe88e" />
        </svg>
      </div>
      <div className="ml-[3px] flex h-full">
        {APPS.map((a) => (
          <TaskApp key={a.id} app={a} />
        ))}
      </div>
      <div className="ml-auto flex items-center pr-[25px] text-[#272223]">
        <svg width="14" height="8" viewBox="0 0 14 8" fill="none" stroke="currentColor" strokeWidth="1.700">
          <path d="M.8 7.200L7 1l6.200 6.200" />
        </svg>
        <svg width="21" height="15" viewBox="0 0 21 15" className="-mt-px ml-[22px]">
          <path d="M5 14a4.300 4.300 0 0 1-1-8.500C5.500.5 14 0 15.500 5.500c6 .5 6 8.500 0 8.500z" fill="#8c8686" stroke="#272223" strokeWidth="1.100" />
          <path d="M3.500 13.300L11 8l8.500 3.500c-.8 1.800-2 2.200-4 2.200H5z" fill="#f2eeee" />
        </svg>
        <svg width="21" height="16" viewBox="0 0 21 16" fill="none" stroke="currentColor" strokeWidth="1.400" className="-mt-px ml-[18px]">
          <path d="M1 6c5.300-6 13.700-6 19 0M4 9c3.600-4.200 9.400-4.200 13 0M7 12c2-2.500 5-2.500 7 0" />
          <circle cx="10.500" cy="14" r="1.500" fill="currentColor" stroke="none" />
        </svg>
        <svg width="21" height="18" viewBox="0 0 21 18" fill="none" stroke="currentColor" strokeWidth="1.200" className="-mt-px ml-[9px]">
          <path d="M1 6.500h3.500L9 2.500v13l-4.500-4H1zM12 6c1.300 2 1.300 4 0 6M14.700 3.800c2.300 3.300 2.300 7 0 10.400M17.400 1.800c3.400 4.600 3.400 9.800 0 14.400" strokeLinejoin="round" />
        </svg>
        <svg width="20" height="13" viewBox="0 0 20 13" fill="none" stroke="currentColor" strokeWidth="1.500" className="-mt-px ml-[9px]">
          <rect x=".8" y=".8" width="16" height="11.400" rx="2.500" />
          <rect x="3" y="3" width="6.500" height="7" fill="currentColor" stroke="none" />
          <path d="M18.700 4.500v4" strokeWidth="2" />
        </svg>
        <div className="-mt-[4px] ml-[21px] flex flex-col items-end text-[15px] leading-5 tracking-[-0.2px]">
          <span>22:35</span>
          <span>07-05-2025</span>
        </div>
      </div>
    </footer>
  );
}

export default function App() {
  return (
    <div className="flex h-[1080px] w-[1920px] flex-col overflow-hidden bg-white font-['Open_Sans',sans-serif]">
      <TabStrip />
      <AddressRow />
      <div className="flex min-h-0 flex-1 font-[Inter,sans-serif] text-[13.750px]">
        <LeftPanel />
        <Canvas />
        <RightPanel />
      </div>
      <TaskBar />
    </div>
  );
}
